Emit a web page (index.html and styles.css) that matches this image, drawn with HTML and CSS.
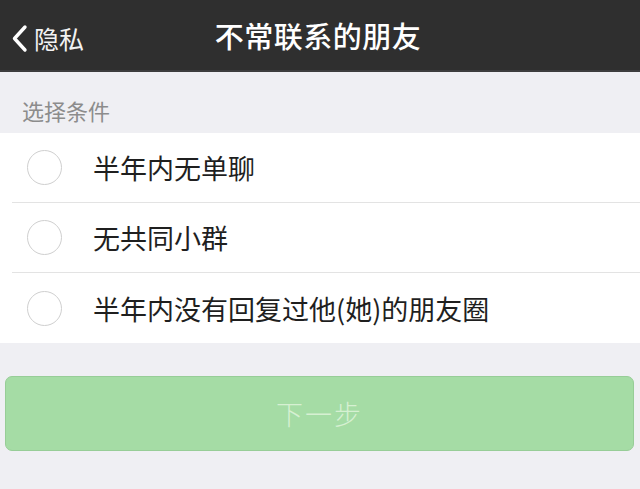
FILE: index.html
```html
<!DOCTYPE html>
<html lang="zh-CN">
<head>
<meta charset="utf-8">
<title>不常联系的朋友</title>
<link rel="stylesheet" href="styles.css">
</head>
<body>
<div class="page">
  <header class="nav">
    <div class="back">
      <svg class="chev" width="20" height="30" viewBox="0 0 20 30"><path d="M15 4 L4.5 15.5 L15 27" fill="none" stroke="#fff" stroke-width="3.4" stroke-linecap="round" stroke-linejoin="round"/></svg>
      <span class="back-text">隐私</span>
    </div>
    <h1 class="title">不常联系的朋友</h1>
  </header>
  <div class="section-label">选择条件</div>
  <ul class="list">
    <li class="row"><span class="radio"></span><span class="row-text">半年内无单聊</span></li>
    <li class="row"><span class="radio"></span><span class="row-text">无共同小群</span></li>
    <li class="row"><span class="radio"></span><span class="row-text">半年内没有回复过他(她)的朋友圈</span></li>
  </ul>
  <div class="actions">
    <button class="btn">下一步</button>
  </div>
</div>
</body>
</html>
```

FILE: styles.css
```css
html, body {
  margin: 0;
  padding: 0;
  background: #efeff3;
  font-family: "Noto Sans CJK SC", "Noto Sans", sans-serif;
}
.page {
  width: 640px;
  height: 489px;
  overflow: hidden;
  background: #efeff3;
}
.nav {
  position: relative;
  height: 70px;
  background: #2f2f2f;
  border-bottom: 2px solid #3d3d3d;
  display: flex;
  align-items: center;
  justify-content: center;
}
.back {
  position: absolute;
  left: 10px;
  top: 0;
  height: 76px;
  display: flex;
  align-items: center;
  gap: 4px;
  color: #fff;
}
.chev {
  display: block;
}
.back-text {
  font-size: 25px;
  line-height: 1;
  color: #f2f2f2;
}
.title {
  margin: 0;
  font-size: 29px;
  font-weight: 500;
  color: #fff;
  letter-spacing: 0.5px;
  line-height: 1;
  margin-left: -4px;
}
.section-label {
  height: 61px;
  box-sizing: border-box;
  padding: 25px 0 0 22px;
  font-size: 22px;
  line-height: 26px;
  color: #8c8c8c;
}
.list {
  list-style: none;
  margin: 0;
  padding: 0;
  background: #fff;
}
.row {
  height: 69px;
  display: flex;
  align-items: center;
  border-bottom: 1px solid #e3e3e3;
  margin-left: 12px;
  padding-left: 15px;
}
.row:last-child {
  border-bottom: none;
  height: 70px;
}
.radio {
  width: 33px;
  height: 33px;
  border: 1.6px solid #cfcfcf;
  border-radius: 50%;
  flex: none;
}
.row-text {
  margin-left: 31px;
  font-size: 27px;
  color: #1f1f1f;
  line-height: 1;
}
.actions {
  padding: 33px 6px 0 5px;
}
.btn {
  display: block;
  width: 100%;
  height: 75px;
  border: 1px solid #97cd97;
  border-radius: 7px;
  background: #a5dca5;
  color: #d6f0d2;
  font-family: "Noto Sans CJK SC", "Noto Sans", sans-serif;
  font-size: 27px;
  font-weight: 300;
  letter-spacing: 2px;
  padding: 0;
}
```
